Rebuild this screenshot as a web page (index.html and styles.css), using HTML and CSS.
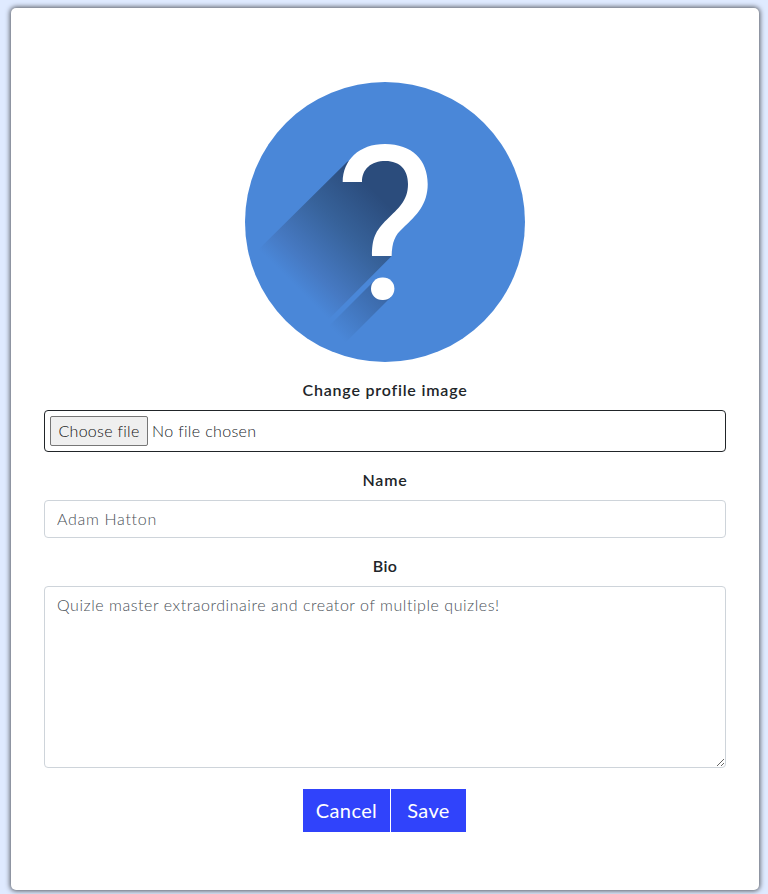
FILE: index.html
```html
<!DOCTYPE html>
<html lang="en">
<head>
<meta charset="utf-8">
<title>Edit profile</title>
<link rel="stylesheet" href="styles.css">
</head>
<body>
<main class="card">
  <svg class="avatar" viewBox="0 0 280 280" aria-hidden="true">
    <defs>
      <linearGradient id="shade" gradientUnits="userSpaceOnUse" x1="145" y1="125" x2="58" y2="212">
        <stop offset="0" stop-color="#2b4c7c"/>
        <stop offset=".4" stop-color="#37629a"/>
        <stop offset=".8" stop-color="#4679c2"/>
        <stop offset="1" stop-color="#4a87d8"/>
      </linearGradient>
      <linearGradient id="shade-dot" gradientUnits="userSpaceOnUse" x1="137" y1="207" x2="92" y2="252">
        <stop offset="0" stop-color="#3a66a4"/>
        <stop offset="1" stop-color="#4a87d8"/>
      </linearGradient>
    </defs>
    <circle cx="140" cy="140" r="140" fill="#4a87d8"/>
    <path d="M102.500 79.500L13 168L83 238L146.700 174L146 148L172 115V80L140 68Z" fill="url(#shade)"/>
    <path d="M129.500 198.500L83 245L100 261L146 215Z" fill="url(#shade-dot)"/>
    <path d="M97.700 100C98 78 114 62 140 62C167 62 182.700 78 182.700 102C182.700 122 172 133 158 146C150 153 147 160 146.700 174H127C127 157 130 149 142 137.500C153 126.500 163 119 163 102C163 88 155 79 140.500 79C126 79 117 87 117 100Z" fill="#fff"/>
    <rect x="126" y="195.500" width="23.400" height="22.500" rx="11.200" fill="#fff"/>
  </svg>
  <form class="form">
    <div class="label"><span>Change profile image</span></div>
    <div class="file">
      <button type="button" class="choose">Choose file</button>
      <span class="status">No file chosen</span>
    </div>
    <div class="label"><span>Name</span></div>
    <input class="field name" type="text" value="Adam Hatton" aria-label="Name">
    <div class="label bio-label"><span>Bio</span></div>
    <textarea class="field bio" aria-label="Bio" spellcheck="false">Quizle master extraordinaire and creator of multiple quizles!</textarea>
    <div class="actions">
      <button type="button" class="btn cancel">Cancel</button>
      <button type="button" class="btn save">Save</button>
    </div>
  </form>
</main>
</body>
</html>
```
FILE: styles.css
```css
* { box-sizing: border-box; }
body {
  margin: 0;
  height: 894px;
  overflow: hidden;
  padding: 8px 9px 4px 11px;
  background: #dfeaff;
  color: #212529;
  font: 300 16px/24px Lato, "Open Sans", sans-serif;
}
.card {
  height: 882px;
  padding: 74px 33px 0;
  background: #fff;
  border-radius: 5px;
  box-shadow: 0 0 5px 1px #55585f;
}
.avatar { display: block; width: 280px; height: 280px; margin: 0 auto 16px; }
.label {
  height: 24px;
  margin-bottom: 8px;
  text-align: center;
  font-weight: 600;
  letter-spacing: .8px;
}
.bio-label { letter-spacing: .3px; }
.file {
  display: flex;
  align-items: center;
  gap: 4px;
  height: 42px;
  margin-bottom: 16px;
  padding: 0 5px;
  border: 1px solid #212529;
  border-radius: 4px;
}
.choose {
  width: 98px;
  height: 30px;
  padding: 0;
  border: 1px solid #767676;
  border-radius: 2px;
  background: #efefef;
  color: #111;
  font: inherit;
  letter-spacing: .3px;
  white-space: nowrap;
}
.status { letter-spacing: .35px; }
.field {
  display: block;
  width: 100%;
  height: 38px;
  margin: 0 0 16px;
  padding: 6px 12px;
  border: 1px solid #ced4da;
  border-radius: 4px;
  background: #fff;
  color: #495057;
  font: inherit;
  outline: 0;
}
.name { padding: 5px 12px 7px; letter-spacing: .7px; }
.bio { height: 182px; margin-bottom: 21px; resize: vertical; letter-spacing: .55px; }
.actions { display: flex; justify-content: center; gap: 1px; margin-right: 1px; }
.btn {
  height: 43px;
  padding: 0 0 2px;
  border: 0;
  background: #3043fb;
  color: #fff;
  font: 400 20px/40px Lato, sans-serif;
  letter-spacing: .4px;
}
.cancel { width: 87px; }
.save { width: 75px; }
```
